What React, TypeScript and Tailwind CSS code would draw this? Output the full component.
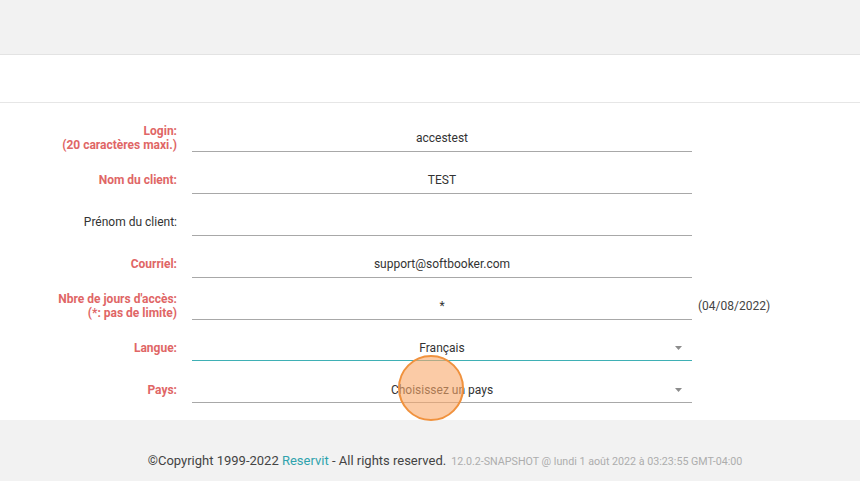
import { ReactNode } from "react";

const font = { fontFamily: "Roboto, 'Liberation Sans', sans-serif" };

function Row({
  label,
  required,
  children,
  after,
}: {
  label: ReactNode;
  required?: boolean;
  children: ReactNode;
  after?: ReactNode;
}) {
  return (
    <div className="flex h-[42px] items-end">
      <div
        className={`flex h-[29px] w-[177px] flex-col items-end justify-center text-right text-[12px] leading-[14px] ${
          required ? "font-bold text-[#e06666]" : "text-[#333]"
        }`}
      >
        {label}
      </div>
      <div className="ml-[15px] w-[500px]">{children}</div>
      {after && (
        <div className="flex h-[29px] items-center pl-[6px] text-[12px] text-[#444]">
          {after}
        </div>
      )}
    </div>
  );
}

function TextField({ value }: { value: string }) {
  return (
    <div className="flex h-[29px] items-center justify-center border-b border-[#a8a8a8] pt-[2px] text-[12px] text-[#333]">
      {value}
    </div>
  );
}

function SelectField({ value, focused }: { value: string; focused?: boolean }) {
  return (
    <div
      className={`relative mb-px flex h-[28px] items-center justify-center border-b pt-[2px] text-[12px] text-[#333] ${
        focused ? "border-[#3fb0b5]" : "border-[#a8a8a8]"
      }`}
    >
      {value}
      <svg
        className="absolute right-[10px] top-[13px]"
        width="7"
        height="4"
        viewBox="0 0 7 4"
      >
        <path d="M0 0h7L3.5 4z" fill="#8c8c8c" />
      </svg>
    </div>
  );
}

export default function App() {
  return (
    <div className="flex min-h-[481px] flex-col bg-white" style={font}>
      <div className="h-[55px] border-b border-[#e3e3e3] bg-[#f2f2f2]" />
      <div className="h-[48px] border-b border-[#e6e6e6] bg-white" />

      <div className="relative bg-white pb-[16px] pt-[7px]">
        <Row
          required
          label={
            <>
              <span>Login:</span>
              <span>(20 caractères maxi.)</span>
            </>
          }
        >
          <TextField value="accestest" />
        </Row>
        <Row required label="Nom du client:">
          <TextField value="TEST" />
        </Row>
        <Row label="Prénom du client:">
          <TextField value="" />
        </Row>
        <Row required label="Courriel:">
          <TextField value="support@softbooker.com" />
        </Row>
        <Row
          required
          label={
            <>
              <span>Nbre de jours d'accès:</span>
              <span>(*: pas de limite)</span>
            </>
          }
          after="(04/08/2022)"
        >
          <TextField value="*" />
        </Row>
        <Row required label="Langue:">
          <SelectField value="Français" focused />
        </Row>
        <Row required label="Pays:">
          <SelectField value="Choisissez un pays" />
        </Row>

        {/* click marker */}
        <div className="absolute left-[398px] top-[252px] h-[66px] w-[66px] rounded-full border-2 border-[#f0923e] bg-[#f9a86a]/60" />
      </div>

      <div className="flex flex-1 items-start justify-center bg-[#f2f2f2] pt-[31px] pl-[30px]">
        <span className="text-[13px] text-[#444]">
          ©Copyright 1999-2022 <span className="text-[#2fa3ad]">Reservit</span> -
          All rights reserved.
        </span>
        <span className="ml-[5px] mt-[3px] text-[10.7px] text-[#adadad]">
          12.0.2-SNAPSHOT @ lundi 1 août 2022 à 03:23:55 GMT-04:00
        </span>
      </div>
    </div>
  );
}
